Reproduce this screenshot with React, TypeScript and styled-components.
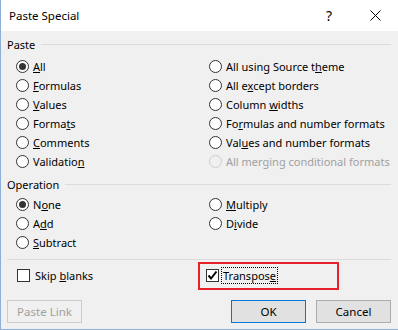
import React from "react";
import styled, { createGlobalStyle, css } from "styled-components";

const Global = createGlobalStyle`
  html, body { margin: 0; padding: 0; background: #f0f0f0; }
  body { font-family: "Segoe UI", "Noto Sans", "Open Sans", sans-serif; font-size: 11px; color: #000; }
  * { box-sizing: border-box; }
`;

const Window = styled.div`
  width: 398px;
  height: 330px;
  background: #f0f0f0;
  border-left: 1px solid #8eafd8;
  border-bottom: 1px solid #8eafd8;
  display: flex;
  flex-direction: column;
  overflow: hidden;
`;

const TitleBar = styled.div`
  height: 31px;
  background: #fff;
  display: flex;
  align-items: center;
  padding-left: 8px;
  font-size: 11.5px;
`;

const Title = styled.div`
  flex: 1;
`;

const TitleButton = styled.div`
  width: 46px;
  height: 31px;
  display: flex;
  align-items: center;
  justify-content: center;
  font-size: 14px;
`;

const Body = styled.div`
  flex: 1;
  padding: 4px 7px 0 6px;
  display: flex;
  flex-direction: column;
`;

const GroupHeader = styled.div<{ $top?: number }>`
  display: flex;
  align-items: center;
  height: 18px;
  gap: 6px;
  margin-top: ${(p) => p.$top ?? 0}px;
`;

const GroupLine = styled.div`
  flex: 1;
  height: 1px;
  background: #dcdcdc;
`;

const Grid = styled.div<{ $top: number }>`
  display: grid;
  grid-template-columns: 193px 1fr;
  grid-auto-rows: 19px;
  padding-left: 9px;
  margin-top: ${(p) => p.$top}px;
`;

const Option = styled.label<{ $disabled?: boolean }>`
  display: flex;
  align-items: center;
  gap: 4px;
  color: ${(p) => (p.$disabled ? "#a0a0a0" : "#000")};
  white-space: nowrap;
`;

const RadioCircle = styled.span<{ $checked?: boolean; $disabled?: boolean }>`
  width: 13px;
  height: 13px;
  border-radius: 50%;
  border: 1px solid ${(p) => (p.$disabled ? "#cccccc" : "#333")};
  background: ${(p) => (p.$disabled ? "#f0f0f0" : "#fff")};
  display: flex;
  align-items: center;
  justify-content: center;
  flex: none;
  ${(p) =>
    p.$checked &&
    css`
      &::after {
        content: "";
        width: 7px;
        height: 7px;
        border-radius: 50%;
        background: #333;
      }
    `}
`;

const Separator = styled.div`
  height: 1px;
  background: #dcdcdc;
  margin-top: 7px;
`;

const CheckRow = styled.div`
  display: grid;
  grid-template-columns: 193px 1fr;
  height: 29px;
  margin-top: 1px;
  align-items: center;
`;

const CheckOption = styled.label`
  display: flex;
  align-items: center;
  gap: 5px;
  padding-left: 10px;
`;

const Highlight = styled.div`
  display: flex;
  align-items: center;
  gap: 3px;
  width: 141px;
  height: 28px;
  border: 2px solid #e8202a;
  margin-left: -2px;
  padding-left: 6px;
`;

const Box = styled.span`
  width: 13px;
  height: 13px;
  border: 1px solid #333;
  background: #fff;
  display: flex;
  align-items: center;
  justify-content: center;
  flex: none;
`;

const Focus = styled.span`
  outline: 1px dotted #000;
  padding: 0 1px;
  line-height: 15px;
`;

const ButtonRow = styled.div`
  display: flex;
  margin-top: 10px;
  gap: 10px;
`;

const Button = styled.button<{ $primary?: boolean; $disabled?: boolean }>`
  width: 75px;
  height: 23px;
  font: inherit;
  font-size: 11.5px;
  padding: 0;
  background: ${(p) => (p.$disabled ? "#f0f0f0" : "#e1e1e1")};
  color: ${(p) => (p.$disabled ? "#a0a0a0" : "#000")};
  border: 1px solid ${(p) => (p.$primary ? "#0078d7" : p.$disabled ? "#cccccc" : "#adadad")};
`;

const Spacer = styled.div`
  flex: 1;
`;

type Opt = { pre: string; key: string; post: string; checked?: boolean; disabled?: boolean };

const Label = ({ o }: { o: Opt }) => (
  <span>
    {o.pre}
    {o.key && <u>{o.key}</u>}
    {o.post}
  </span>
);

const Radio = ({ o }: { o: Opt }) => (
  <Option $disabled={o.disabled}>
    <RadioCircle $checked={o.checked} $disabled={o.disabled} />
    <Label o={o} />
  </Option>
);

const paste: Opt[] = [
  { pre: "", key: "A", post: "ll", checked: true },
  { pre: "All using Source t", key: "h", post: "eme" },
  { pre: "", key: "F", post: "ormulas" },
  { pre: "All e", key: "x", post: "cept borders" },
  { pre: "", key: "V", post: "alues" },
  { pre: "Column ", key: "w", post: "idths" },
  { pre: "Forma", key: "t", post: "s" },
  { pre: "Fo", key: "r", post: "mulas and number formats" },
  { pre: "", key: "C", post: "omments" },
  { pre: "Val", key: "u", post: "es and number formats" },
  { pre: "Validatio", key: "n", post: "" },
  { pre: "All merging conditional formats", key: "", post: "", disabled: true },
];

const operation: (Opt | null)[] = [
  { pre: "N", key: "o", post: "ne", checked: true },
  { pre: "", key: "M", post: "ultiply" },
  { pre: "A", key: "d", post: "d" },
  { pre: "D", key: "i", post: "vide" },
  { pre: "", key: "S", post: "ubtract" },
  null,
];

export default function App() {
  return (
    <>
      <Global />
      <Window>
        <TitleBar>
          <Title>Paste Special</Title>
          <TitleButton>?</TitleButton>
          <TitleButton>
            <svg width="11" height="11" viewBox="0 0 11 11">
              <path d="M0.5 0.5 L10.5 10.5 M10.5 0.5 L0.5 10.5" stroke="#000" strokeWidth="1" />
            </svg>
          </TitleButton>
        </TitleBar>
        <Body>
          <GroupHeader>
            <span>Paste</span>
            <GroupLine />
          </GroupHeader>
          <Grid $top={4}>
            {paste.map((o, i) => (
              <Radio key={i} o={o} />
            ))}
          </Grid>
          <GroupHeader $top={4}>
            <span>Operation</span>
            <GroupLine />
          </GroupHeader>
          <Grid $top={2}>
            {operation.map((o, i) => (o ? <Radio key={i} o={o} /> : <span key={i} />))}
          </Grid>
          <Separator />
          <CheckRow>
            <CheckOption>
              <Box />
              <span>
                Skip <u>b</u>lanks
              </span>
            </CheckOption>
            <Highlight>
              <Box>
                <svg width="11" height="11" viewBox="0 0 11 11">
                  <path d="M1.5 5.5 L4 8.5 L9.5 1.5" stroke="#000" strokeWidth="2" fill="none" />
                </svg>
              </Box>
              <Focus>
                Transpos<u>e</u>
              </Focus>
            </Highlight>
          </CheckRow>
          <ButtonRow>
            <Button $disabled>Paste Link</Button>
            <Spacer />
            <Button $primary>OK</Button>
            <Button>Cancel</Button>
          </ButtonRow>
        </Body>
      </Window>
    </>
  );
}
